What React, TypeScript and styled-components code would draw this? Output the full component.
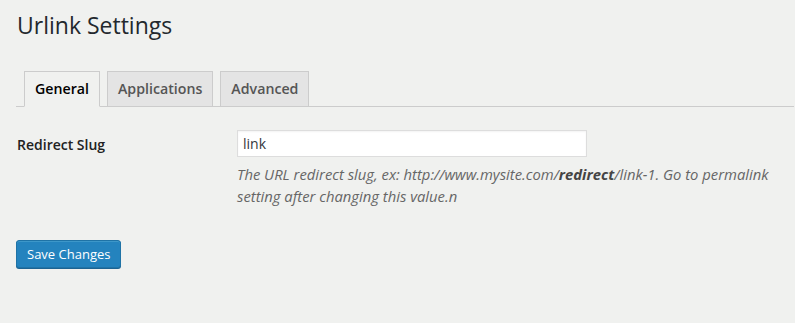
import styled, { createGlobalStyle } from "styled-components";

const GlobalStyle = createGlobalStyle`
  html, body {
    margin: 0;
    padding: 0;
    background: #f0f1ef;
  }
  body {
    font-family: "Open Sans", "Noto Sans", sans-serif;
    color: #444;
    font-size: 13px;
  }
`;

const SWrap = styled.div`
  padding: 0 1px 0 16px;
  height: 323px;
  box-sizing: border-box;
`;

const STitle = styled.h1`
  margin: 0;
  padding: 11px 0 0 1px;
  font-size: 23px;
  font-weight: 400;
  line-height: 29px;
  color: #23282d;
`;

const STabs = styled.div`
  display: flex;
  gap: 7px;
  margin-top: 31px;
  padding-left: 8px;
  border-bottom: 1px solid #ccc;
`;

const STab = styled.a<{ $active?: boolean }>`
  display: block;
  padding: 5px 10px;
  font-size: 14.2px;
  font-weight: 600;
  line-height: 24px;
  border: 1px solid #ccc;
  border-bottom: 1px solid ${({ $active }) => ($active ? "#f0f1ef" : "#ccc")};
  margin-bottom: -1px;
  background: ${({ $active }) => ($active ? "#f0f1ef" : "#e4e4e4")};
  color: ${({ $active }) => ($active ? "#000" : "#555")};
  text-decoration: none;
  cursor: pointer;
`;

const SRow = styled.div`
  display: flex;
  padding-top: 23px;
`;

const SLabel = styled.label`
  width: 220px;
  flex-shrink: 0;
  padding: 5px 0 0 1px;
  font-size: 14px;
  font-weight: 600;
  line-height: 20px;
  color: #222;
`;

const SField = styled.div`
  flex: 1;
  padding-right: 10px;
`;

const SInput = styled.input`
  display: block;
  box-sizing: border-box;
  width: 350px;
  height: 27px;
  margin: 0;
  padding: 3px 5px;
  border: 1px solid #ddd;
  background: #fff;
  font-family: "Open Sans", "Noto Sans", sans-serif;
  font-size: 14px;
  color: #32373c;
  box-shadow: inset 0 1px 2px rgba(0, 0, 0, 0.05);
  outline: none;
`;

const SDesc = styled.p`
  margin: 6px 0 0;
  font-size: 14.8px;
  font-style: italic;
  line-height: 22px;
  color: #666;
  b {
    font-weight: 700;
    color: #444;
  }
`;

const SButton = styled.button`
  display: block;
  margin-top: 33px;
  height: 28px;
  padding: 0 10px 1px;
  background: #2483be;
  border: 1px solid #1f73a6;
  border-radius: 3px;
  box-shadow: 0 1px 0 #1b6393, inset 0 1px 0 rgba(120, 200, 230, 0.3);
  color: #fff;
  font-family: "Open Sans", "Noto Sans", sans-serif;
  font-size: 13px;
  line-height: 26px;
  cursor: pointer;
`;

const App = () => {
  return (
    <>
      <GlobalStyle />
      <SWrap>
        <STitle>Urlink Settings</STitle>
        <STabs>
          <STab $active>General</STab>
          <STab>Applications</STab>
          <STab>Advanced</STab>
        </STabs>
        <SRow>
          <SLabel htmlFor="slug">Redirect Slug</SLabel>
          <SField>
            <SInput id="slug" defaultValue="link" />
            <SDesc>
              The URL redirect slug, ex: http://www.mysite.com/<b>redirect</b>
              /link-1. Go to permalink setting after changing this value.n
            </SDesc>
          </SField>
        </SRow>
        <SButton>Save Changes</SButton>
      </SWrap>
    </>
  );
};
export default App;
